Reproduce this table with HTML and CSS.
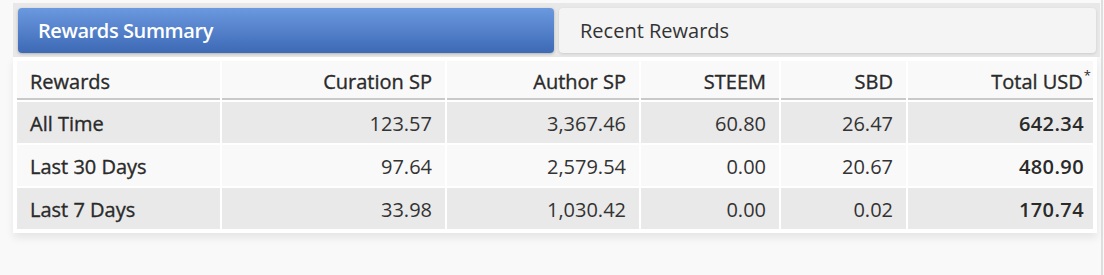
FILE: index.html
```html
<!DOCTYPE html>
<html>
<head>
<meta charset="utf-8">
<link rel="stylesheet" href="styles.css">
</head>
<body>
<div class="page">
  <div class="tabs">
    <div class="tab tab-active">Rewards Summary</div>
    <div class="tab">Recent Rewards</div>
  </div>
  <div class="table-card">
    <table class="rewards">
      <thead>
        <tr>
          <th class="label c1">Rewards</th>
          <th class="c2">Curation SP</th>
          <th class="c3">Author SP</th>
          <th class="c4">STEEM</th>
          <th class="c5">SBD</th>
          <th class="c6 total">Total USD<sup class="star">*</sup></th>
        </tr>
      </thead>
      <tbody>
        <tr class="odd">
          <td class="label">All Time</td>
          <td>123.57</td>
          <td>3,367.46</td>
          <td>60.80</td>
          <td>26.47</td>
          <td class="total">642.34</td>
        </tr>
        <tr class="even">
          <td class="label">Last 30 Days</td>
          <td>97.64</td>
          <td>2,579.54</td>
          <td>0.00</td>
          <td>20.67</td>
          <td class="total">480.90</td>
        </tr>
        <tr class="odd">
          <td class="label">Last 7 Days</td>
          <td>33.98</td>
          <td>1,030.42</td>
          <td>0.00</td>
          <td>0.02</td>
          <td class="total">170.74</td>
        </tr>
      </tbody>
    </table>
  </div>
</div>
</body>
</html>
```
FILE: styles.css
```css
html, body {
  margin: 0;
  padding: 0;
}
body {
  background: #f9f9f9;
  font-family: "Open Sans", "Liberation Sans", sans-serif;
  color: #333;
  width: 1104px;
  height: 275px;
  overflow: hidden;
}
.page {
  padding: 3px 0 0 13px;
  width: 1103px;
  height: 275px;
  border-right: 2px solid #dedede;
  box-sizing: border-box;
}
.tabs {
  display: flex;
  gap: 5px;
  background: #e8e8e8;
  padding: 5px 4px 4px 5px;
  width: 1087px;
  box-sizing: border-box;
}
.tab {
  flex: 1 1 0;
  height: 45px;
  box-sizing: border-box;
  border-radius: 4px;
  background: #f4f4f4;
  box-shadow: 0 1px 3px rgba(0,0,0,0.12);
  font-size: 20px;
  line-height: 45px;
  padding-left: 21px;
  color: #333;
}
.tab-active {
  background: linear-gradient(#6b99df, #3d69b5);
  color: #fff;
  font-weight: 600;
  letter-spacing: -0.4px;
  padding-left: 20px;
  box-shadow: 0 1px 3px rgba(0,0,0,0.25);
}
.table-card {
  width: 1084px;
  background: #fff;
  padding: 2px;
  box-sizing: border-box;
  box-shadow: 0 5px 8px rgba(0,0,0,0.08);
}
.rewards {
  width: 100%;
  table-layout: fixed;
  border-collapse: separate;
  border-spacing: 2px;
  font-size: 20px;
}
.rewards th,
.rewards td {
  text-align: right;
  padding: 0 13px;
  white-space: nowrap;
  box-sizing: border-box;
}
.rewards th {
  height: 39px;
  padding-top: 4px;
  background: #f9f9f9;
  font-weight: 400;
  color: #2a2a2a;
  -webkit-text-stroke: 0.35px #2a2a2a;
  border-bottom: 2px solid #c9c9c9;
}
.rewards td {
  height: 41px;
  padding-top: 2px;
}
.rewards .label {
  text-align: left;
  color: #2a2a2a;
  -webkit-text-stroke: 0.35px #2a2a2a;
}
.c1 { width: 203px; }
.c2 { width: 223px; }
.c3 { width: 192px; }
.c4 { width: 138px; }
.c5 { width: 125px; }
.rewards .total {
  padding-right: 9px;
}
.rewards td.total {
  font-weight: 600;
  letter-spacing: 0.4px;
  color: #2a2a2a;
}
.rewards th.total {
  padding-right: 2px;
}
.star {
  font-size: 13px;
  -webkit-text-stroke: 0;
  vertical-align: 9px;
  line-height: 0;
  margin-left: 1px;
}
.odd td { background: #e9e9e9; }
.even td { background: #f9f9f9; }
```
